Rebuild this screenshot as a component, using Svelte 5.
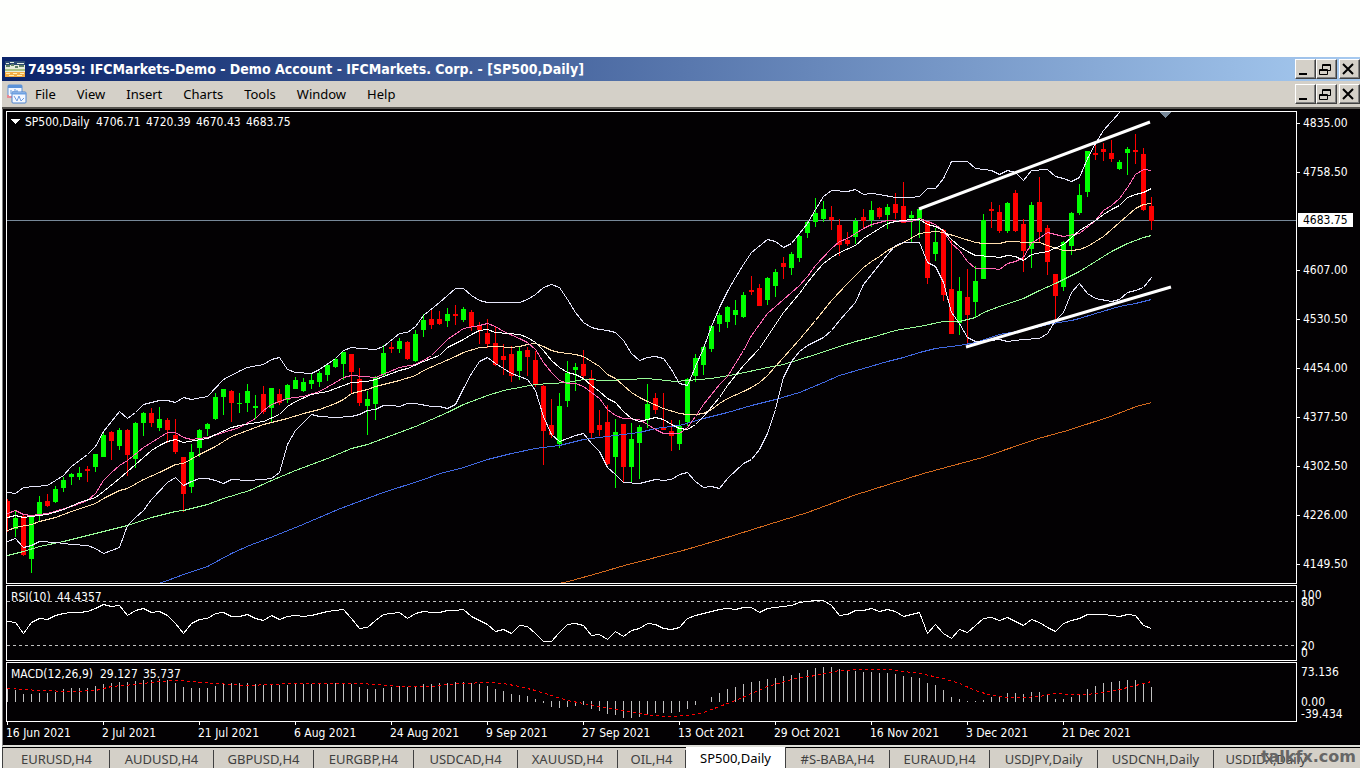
<script>
  const menus = ["File", "View", "Insert", "Charts", "Tools", "Window", "Help"];

  const tabs = [
    { name: "EURUSD,H4", width: 106 },
    { name: "AUDUSD,H4", width: 104 },
    { name: "GBPUSD,H4", width: 100 },
    { name: "EURGBP,H4", width: 100 },
    { name: "USDCAD,H4", width: 104 },
    { name: "XAUUSD,H4", width: 100 },
    { name: "OIL,H4", width: 68 },
    { name: "SP500,Daily", width: 100, active: true },
    { name: "#S-BABA,H4", width: 104 },
    { name: "EURAUD,H4", width: 100 },
    { name: "USDJPY,Daily", width: 108 },
    { name: "USDCNH,Daily", width: 116 },
    { name: "USDIDX,Daily", width: 104 }
  ];

  const prices = [
    "4835.00", "4758.50", "4683.75", "4607.00", "4530.50",
    "4454.00", "4377.50", "4302.50", "4226.00", "4149.50"
  ];

  const ohlc = ["4706.71", "4720.39", "4670.43", "4683.75"];

  const dates = [
    "16 Jun 2021", "2 Jul 2021", "21 Jul 2021", "6 Aug 2021",
    "24 Aug 2021", "9 Sep 2021", "27 Sep 2021", "13 Oct 2021",
    "29 Oct 2021", "16 Nov 2021", "3 Dec 2021", "21 Dec 2021"
  ];

  const step = 8;

  // high, body top, body bottom, low, rising
  const candles = [
    [499, 501, 518, 532, 0], [510, 518, 529, 537, 1], [515, 516, 555, 556, 0], [515, 516, 559, 573, 1],
    [496, 502, 514, 521, 1], [494, 501, 506, 507, 0], [486, 489, 502, 503, 1], [477, 480, 488, 492, 1],
    [473, 474, 477, 485, 1], [467, 473, 477, 480, 1], [466, 469, 471, 482, 0], [454, 454, 467, 472, 1],
    [432, 435, 457, 457, 1], [431, 432, 441, 460, 0], [428, 430, 446, 450, 1], [429, 430, 455, 476, 0],
    [422, 423, 459, 468, 1], [412, 413, 423, 436, 1], [408, 413, 423, 427, 0], [407, 419, 428, 431, 1],
    [418, 420, 430, 443, 0], [419, 435, 452, 454, 0], [457, 457, 494, 512, 0], [444, 452, 487, 493, 1],
    [429, 430, 448, 457, 1], [423, 424, 429, 436, 1], [393, 397, 419, 420, 1], [389, 389, 397, 415, 1],
    [390, 391, 403, 422, 0], [393, 403, 404, 413, 1], [384, 391, 403, 412, 1], [395, 406, 408, 419, 1],
    [386, 394, 412, 414, 0], [388, 388, 408, 422, 1], [389, 394, 403, 405, 0], [384, 385, 400, 403, 1],
    [377, 380, 389, 389, 1], [378, 382, 391, 392, 1], [373, 380, 384, 389, 1], [371, 373, 382, 387, 1],
    [364, 365, 375, 381, 1], [358, 359, 367, 368, 1], [352, 352, 364, 380, 1], [354, 354, 372, 393, 0],
    [368, 379, 403, 406, 0], [391, 399, 406, 435, 1], [376, 377, 404, 420, 1], [345, 353, 375, 376, 1],
    [342, 347, 349, 353, 0], [338, 341, 349, 353, 1], [341, 342, 359, 360, 0], [330, 334, 361, 362, 1],
    [314, 320, 330, 337, 1], [310, 319, 325, 329, 0], [311, 319, 324, 325, 0], [308, 314, 321, 327, 1],
    [305, 314, 316, 325, 0], [307, 309, 320, 322, 1], [310, 312, 327, 331, 0], [322, 326, 330, 344, 0],
    [319, 333, 344, 348, 0], [326, 343, 365, 366, 0], [344, 356, 360, 375, 0], [346, 354, 376, 382, 0],
    [347, 351, 371, 380, 1], [347, 350, 357, 376, 0], [351, 360, 384, 387, 0], [385, 386, 431, 465, 0],
    [399, 425, 435, 438, 0], [393, 406, 444, 448, 1], [361, 373, 401, 407, 1], [363, 367, 370, 391, 1],
    [350, 364, 376, 378, 0], [370, 378, 433, 439, 0], [410, 425, 430, 436, 0], [405, 422, 464, 465, 0],
    [419, 432, 457, 488, 1], [424, 424, 467, 482, 0], [423, 439, 467, 482, 1], [425, 427, 443, 479, 1],
    [384, 404, 419, 428, 1], [393, 398, 410, 414, 0], [393, 427, 430, 430, 0], [420, 431, 436, 451, 0],
    [420, 426, 444, 450, 1], [378, 379, 422, 426, 1], [354, 358, 376, 382, 1], [346, 347, 365, 375, 1],
    [325, 326, 349, 352, 1], [313, 315, 324, 332, 1], [306, 307, 322, 328, 1], [300, 310, 315, 325, 1],
    [292, 295, 317, 318, 1], [276, 290, 292, 295, 0], [284, 288, 306, 306, 0], [277, 278, 300, 305, 1],
    [269, 272, 286, 297, 1], [257, 263, 267, 279, 0], [252, 254, 268, 275, 1], [235, 236, 258, 262, 1],
    [221, 222, 233, 238, 1], [198, 213, 222, 227, 1], [201, 209, 219, 222, 1], [206, 217, 220, 230, 0],
    [219, 225, 245, 256, 0], [232, 240, 244, 246, 0], [218, 221, 237, 244, 1], [209, 217, 221, 229, 0],
    [201, 210, 220, 227, 1], [207, 208, 217, 219, 0], [204, 207, 215, 229, 1], [193, 204, 213, 219, 0],
    [182, 206, 223, 223, 0], [211, 215, 218, 242, 1], [208, 209, 219, 238, 1], [221, 221, 278, 284, 0],
    [228, 242, 254, 261, 1], [229, 230, 295, 301, 0], [239, 289, 334, 334, 0], [277, 291, 323, 335, 1],
    [269, 297, 315, 344, 0], [266, 281, 302, 317, 1], [214, 220, 279, 279, 1], [202, 209, 211, 228, 0],
    [205, 212, 231, 233, 0], [202, 203, 231, 233, 1], [190, 193, 231, 232, 0], [219, 224, 251, 272, 0],
    [202, 205, 249, 268, 1], [177, 202, 232, 242, 0], [225, 228, 262, 275, 0], [274, 274, 296, 320, 0],
    [241, 242, 287, 291, 1], [212, 213, 246, 255, 1], [184, 195, 213, 215, 1], [151, 151, 192, 197, 1],
    [143, 153, 155, 160, 0], [143, 149, 152, 161, 0], [140, 153, 159, 162, 0], [160, 162, 169, 170, 1],
    [147, 149, 153, 175, 1], [134, 150, 152, 164, 0], [148, 154, 210, 211, 0], [197, 206, 221, 230, 0]
  ];

  const lines = [
    {
      name: "ma200",
      points: "558,583 568,581 600,572 624,565 686,549 720,539 768,524 807,512 853,495 923,473 982,457 1038,438 1067,430 1110,416 1136,406 1151,402"
    },
    {
      name: "ma100",
      points: "155,584 167,580 183,574 207,566 231,553 249,545 270,537 300,525 340,508 380,493 420,480 440,473 463,467 487,459 511,453 535,448 559,445 583,439 607,436 639,432 655,428 679,425 703,418 727,412 751,405 775,399 799,392 823,382 839,375 863,368 887,361 903,357 919,352 935,348 959,345 975,342 999,334 1023,330 1047,324 1071,320 1079,318 1095,313 1119,306 1135,303 1151,299"
    },
    {
      name: "ma50",
      points: "7,555 23,551 39,546 63,541 95,533 127,525 151,517 175,511 183,510 207,504 223,498 249,490 271,480 295,470 327,458 351,448 367,444 391,435 415,426 431,419 447,412 463,404 487,395 503,390 535,384 551,383 567,382 583,379 607,380 647,378 675,381 687,380 711,378 735,374 767,367 783,364 799,359 815,354 839,346 855,341 871,337 895,330 919,326 943,321 959,321 975,317 983,312 999,306 1023,298 1039,290 1055,283 1071,275 1079,271 1111,251 1127,243 1143,237 1151,235"
    },
    {
      name: "slow",
      points: "7,530 15,527 31,524 39,521 55,517 71,511 95,503 103,498 119,490 127,488 143,479 159,472 175,464 183,463 199,454 215,446 231,436 247,430 263,424 287,418 303,413 319,409 335,403 343,399 351,393 359,391 367,389 375,386 399,380 415,375 423,370 439,363 455,356 463,352 479,347 495,346 511,347 519,346 527,344 535,343 543,346 551,350 559,352 575,354 583,356 591,361 599,366 607,374 615,378 623,385 631,392 639,397 647,401 663,408 679,413 687,414 695,414 703,413 711,409 719,403 727,398 743,391 751,387 759,382 767,375 775,366 783,357 799,339 815,320 831,300 847,283 863,267 871,261 879,256 887,250 895,246 903,242 919,233 935,231 943,232 959,237 975,242 983,243 999,243 1007,241 1031,242 1039,242 1047,245 1063,250 1071,250 1079,249 1087,246 1103,236 1119,222 1135,208 1143,204 1151,203"
    },
    {
      name: "band",
      points: "7,492 15,493 23,487 47,485 63,475 71,466 87,454 95,446 103,431 119,411 127,418 135,412 143,404 159,400 167,400 175,402 183,397 191,399 207,396 223,379 240,370 247,367 263,364 271,359 279,357 287,369 295,372 311,373 319,369 335,358 343,350 351,347 359,348 375,349 383,346 399,333 407,332 415,326 423,315 439,302 455,288 463,288 471,295 479,300 487,302 519,302 527,299 535,294 543,287 551,284 559,287 567,299 575,312 583,322 591,327 599,329 607,330 615,332 623,340 631,353 639,360 647,357 655,356 663,358 671,369 679,383 687,385 695,366 703,348 711,326 719,307 727,291 735,277 743,264 751,252 767,239 775,241 783,247 791,243 799,233 807,223 815,209 823,196 831,190 847,191 855,189 863,194 871,193 879,194 895,197 911,197 919,196 927,188 935,188 943,178 951,161 967,161 975,168 991,170 999,174 1007,170 1015,172 1023,180 1031,170 1047,169 1055,176 1063,178 1071,181 1079,177 1087,158 1095,143 1103,130 1111,121 1120,111"
    },
    {
      name: "band",
      points: "7,541 15,538 23,547 31,545 39,541 55,542 71,544 87,545 95,548 103,553 111,550 119,547 127,525 135,517 143,510 151,499 167,482 175,477 183,485 191,481 199,478 207,478 215,480 223,483 231,479 247,480 263,479 271,478 279,472 287,444 295,430 311,414 319,416 335,417 351,416 359,414 367,410 375,409 383,405 391,405 399,406 407,403 415,403 431,406 439,406 447,408 455,404 463,388 471,373 479,361 487,357 495,363 511,373 527,379 535,390 543,416 551,434 559,441 575,435 583,433 591,443 599,451 607,467 615,474 623,482 639,483 655,479 663,480 671,479 679,474 687,472 695,481 703,487 711,486 719,488 727,478 743,463 751,459 759,449 767,433 775,409 783,377 791,361 799,351 807,345 815,341 823,337 831,330 839,320 855,302 863,284 871,274 887,254 895,245 903,242 919,242 927,262 935,266 943,282 951,312 959,323 967,337 975,341 991,340 999,339 1007,341 1023,339 1039,338 1047,333 1055,320 1063,312 1071,292 1079,283 1087,293 1095,298 1111,301 1119,299 1127,292 1135,290 1143,287 1151,277"
    },
    {
      name: "fast",
      points: "7,513 15,510 23,514 31,515 47,513 71,506 87,500 95,493 103,480 111,472 119,465 127,460 143,447 159,437 167,432 175,432 183,437 191,439 207,437 223,432 239,427 255,418 263,410 271,404 287,398 303,396 319,391 335,382 343,377 351,375 375,377 399,367 415,364 423,360 431,355 447,339 463,328 479,325 487,323 495,326 503,331 519,338 527,342 535,349 543,362 551,372 559,380 567,383 575,383 583,386 599,398 607,409 615,415 623,418 639,419 647,424 655,429 663,433 679,433 687,427 695,416 703,404 711,394 719,384 727,376 735,363 743,350 751,335 759,324 767,313 783,299 799,285 807,276 815,265 831,248 839,241 847,238 855,233 863,228 871,224 879,222 887,220 903,221 911,221 919,218 935,224 943,231 951,243 959,250 967,261 975,268 991,268 999,269 1007,263 1015,261 1023,257 1031,243 1047,232 1063,236 1079,233 1095,220 1103,210 1111,205 1119,198 1127,187 1135,174 1143,169 1151,170"
    },
    {
      name: "mid",
      points: "7,517 15,515 23,517 31,516 47,514 63,509 79,502 95,497 103,491 119,478 127,471 143,457 151,450 159,445 167,441 175,439 183,442 207,438 215,434 231,427 239,425 263,421 279,414 287,406 295,401 311,394 327,391 335,388 351,382 367,381 375,379 383,376 399,370 407,368 423,361 439,355 447,347 463,339 471,334 479,330 487,329 495,332 519,334 527,337 535,342 543,350 551,360 559,367 567,372 575,374 583,378 591,385 599,391 607,398 615,402 623,411 631,418 639,421 655,417 663,419 671,424 679,428 687,429 695,424 703,416 719,397 727,385 735,375 743,365 759,348 767,336 775,324 783,312 799,293 807,282 815,272 823,263 831,257 839,252 855,245 863,238 879,228 887,223 895,221 911,219 919,219 927,224 935,226 943,230 951,239 959,246 967,251 975,255 991,256 999,257 1007,255 1015,256 1023,260 1031,254 1047,251 1063,244 1071,237 1079,230 1095,220 1103,214 1111,209 1119,205 1127,197 1135,194 1143,192 1151,188"
    }
  ];

  // vertical position of each bar's RSI in the pane
  const rsi = [
    35, 36, 47, 36, 32, 33, 29, 27, 26, 26, 25, 22, 18, 20, 19, 29, 24, 22, 26, 25, 29, 37, 47, 37, 33,
    32, 27, 26, 30, 30, 28, 32, 34, 29, 33, 30, 29, 30, 29, 27, 25, 24, 23, 32, 42, 41, 34, 28, 27, 26,
    32, 27, 25, 26, 26, 24, 24, 23, 30, 34, 38, 45, 43, 47, 39, 40, 47, 55, 55, 46, 38, 37, 39, 49, 48,
    53, 45, 50, 44, 42, 37, 38, 42, 43, 41, 32, 29, 27, 25, 23, 22, 23, 21, 21, 26, 22, 21, 20, 19, 16,
    15, 14, 14, 19, 29, 28, 24, 24, 22, 25, 23, 25, 30, 28, 26, 47, 38, 47, 52, 43, 46, 39, 32, 31, 34,
    31, 35, 39, 33, 36, 41, 45, 37, 34, 32, 28, 28, 28, 29, 30, 28, 29, 39, 42
  ];

  // bar lengths, up from the zero line
  const macd = [
    13, 12, 8, 8, 9, 9, 10, 13, 14, 14, 14, 16, 18, 19, 20, 20, 21, 22, 22, 23, 22, 19, 15, 14, 14,
    14, 16, 18, 19, 19, 19, 18, 17, 18, 17, 17, 18, 18, 18, 18, 18, 19, 18, 18, 15, 13, 13, 14, 15, 16,
    15, 15, 18, 18, 19, 19, 20, 20, 19, 18, 16, 13, 11, 8, 7, 6, 3, -2, -6, -7, -6, -5, -4, -8, -10,
    -13, -14, -17, -17, -16, -14, -12, -12, -12, -11, -8, -4, 0, 5, 9, 13, 15, 18, 20, 21, 23, 24, 26, 27, 29,
    32, 34, 35, 35, 33, 32, 31, 30, 30, 29, 29, 28, 26, 25, 24, 19, 17, 12, 5, 3, 1, 1, 2, 5, 6,
    9, 9, 8, 10, 10, 7, 3, 3, 5, 8, 13, 16, 19, 20, 21, 22, 22, 19, 15
  ];

  const signal =
    "7,688 23,689 39,690 71,691 95,690 111,686 135,684 159,681 175,680 191,681 199,682 215,683 247,685 271,684 287,683 359,683 375,684 400,686 430,686 447,684 463,683 487,682 503,683 519,686 535,690 551,695 567,700 583,703 599,706 623,710 639,713 650,715 671,716 687,715 703,712 719,706 735,700 751,693 767,686 791,679 815,675 839,670 863,669 887,669 903,671 919,673 943,678 959,683 975,690 991,695 1007,697 1023,697 1039,696 1055,693 1071,694 1087,694 1103,692 1119,689 1135,685 1143,683 1151,681";

  const rsiPoints = rsi.map((y, i) => `${i * step},${y}`).join(" ");
</script>

{#snippet windowButtons(label)}
  <div class="win-buttons">
    <button aria-label="Minimize {label}">
      <svg width="16" height="15"><path d="M3 12h8" stroke="#000" stroke-width="2" /></svg>
    </button>
    <button aria-label="Restore {label}">
      <svg width="16" height="15">
        <path d="M5.500 7V2.500h8v6h-3M5 3.500h9M2.500 7.500h8v5h-8zM2 8.500h9" fill="none" stroke="#000" />
      </svg>
    </button>
    <button class="close" aria-label="Close {label}">
      <svg width="16" height="15"><path d="M3 2l10 10M13 2L3 12" stroke="#000" stroke-width="2" /></svg>
    </button>
  </div>
{/snippet}

<div class="terminal">
  <header class="title-bar">
    <svg class="app-icon" width="20" height="16" shape-rendering="crispEdges">
      <rect width="20" height="16" fill="#e8ecd8" />
      <rect width="20" height="4" fill="#2c4a72" />
      <path d="M1 2h3M5 1h4M12 2h7" stroke="#e6efe0" />
      <path d="M1 5h4M6 4h3M10 6h3M14 5h5" stroke="#5c7f66" stroke-width="2" />
      <path d="M0 9h20" stroke="#a9c183" stroke-width="2" />
      <rect y="11" width="20" height="5" fill="#f3ad45" />
      <path d="M1 12h4M8 12h4M15 12h4M4 14h5M12 14h5" stroke="#fff0b5" />
    </svg>
    <h1>749959: IFCMarkets-Demo - Demo Account - IFCMarkets. Corp. - [SP500,Daily]</h1>
    {@render windowButtons("terminal")}
  </header>

  <nav class="menu-bar">
    <svg class="doc-icon" width="20" height="20">
      <rect x="1" y="1" width="14" height="12" rx="1" fill="#f4f8ff" stroke="#5c93d8" />
      <path d="M1 2.500h14" stroke="#5c93d8" stroke-width="3" />
      <path d="M4 10V6M6 10V7M8 8V5M10 10V6" stroke="#5c93d8" />
      <path d="M1 11v2h4" fill="none" stroke="#e88a94" stroke-width="2" />
      <rect x="5" y="8" width="14" height="11" rx="1" fill="#f4f8ff" stroke="#4d83cf" />
      <path d="M5 9.500h14" stroke="#6da1e2" stroke-width="2" />
      <path d="M7 12l3 5 2-5 2 5 3-3" fill="none" stroke="#6b9be0" />
    </svg>
    {#each menus as menu}
      <button class="menu">{menu}</button>
    {/each}
    {@render windowButtons("chart")}
  </nav>

  <main class="chart">
    <section class="row price-row">
      <div class="pane">
        <svg class="plot" shape-rendering="crispEdges" role="img" aria-label="SP500 daily candles">
          <path d="M0 108.500h4000" class="bid" />
          <g transform="translate(0 -112)">
            {#each candles as [high, top, bottom, low, up], i}
              <g class={up ? "up" : "down"}>
                <rect x={i * step} y={high} width="1" height={low - high} />
                <rect x={i * step - 2} y={top} width="5" height={bottom - top} />
              </g>
            {/each}
          </g>
          <g transform="translate(-6.500 -111.500)">
            {#each lines as line}
              <polyline class="line {line.name}" points={line.points} />
            {/each}
          </g>
          <g transform="translate(-7 -112)">
            <path class="trend" d="M919 209L1150 122M966 347L1171 287" />
            <path d="M1159 112h12l-6 6z" fill="#778899" />
            <path d="M10 119h10l-5 5z" fill="#fff" />
          </g>
          <text class="caption" x="18" y="14">SP500,Daily</text>
          {#each ohlc as value, i}
            <text class="caption" x={89 + i * 50} y="14">{value}</text>
          {/each}
        </svg>
      </div>
      <div class="axis price-axis">
        {#each prices as price, i}
          <span class:current={i === 2}>{price}</span>
        {/each}
      </div>
    </section>

    <section class="row rsi-row">
      <div class="pane">
        <svg class="plot" shape-rendering="crispEdges" role="img" aria-label="RSI">
          <path class="level" d="M0 15.500h4000M0 59.500h4000" />
          <g transform="translate(0.500 0.500)">
            <polyline class="line mid" points={rsiPoints} />
          </g>
          <text class="caption" x="4" y="15">RSI(10)</text>
          <text class="caption" x="50" y="15">44.4357</text>
        </svg>
      </div>
      <div class="axis rsi-axis">
        <span>100</span>
        <span>80</span>
        <span class="low">20</span>
        <span>0</span>
      </div>
    </section>

    <section class="row macd-row">
      <div class="pane">
        <svg class="plot" shape-rendering="crispEdges" role="img" aria-label="MACD">
          {#each macd as v, i}
            <rect x={i * step} y={v > 0 ? 39 - v : 38} width="1" height={Math.abs(v)} fill="#c0c0c0" />
          {/each}
          <g transform="translate(-6.500 -662.500)">
            <polyline class="line signal" points={signal} />
          </g>
          <text class="caption" x="4" y="15">MACD(12,26,9)</text>
          <text class="caption" x="93" y="15">29.127</text>
          <text class="caption" x="136" y="15">35.737</text>
        </svg>
      </div>
      <div class="axis macd-axis">
        <span>73.136</span>
        <span class="zero">0.00</span>
        <span>-39.434</span>
      </div>
    </section>

    <div class="time-axis">
      {#each dates as date}
        <span>{date}</span>
      {/each}
    </div>
  </main>

  <footer class="tabs">
    {#each tabs as tab}
      <button class="tab" class:active={tab.active} style="width: {tab.width}px">{tab.name}</button>
    {/each}
    <span class="watermark">talkfx.com</span>
  </footer>
</div>

<style>
  :global(body) {
    background: #fefffd;
  }

  .terminal {
    padding: 57px 0 0 2px;
    font-family: "DejaVu Sans Condensed", "Noto Sans", sans-serif;
    font-size: 12px;
    color: #000;
    overflow: hidden;
  }

  button {
    margin: 0;
    padding: 0;
    border: 0;
    background: none;
    font: inherit;
    color: inherit;
  }

  .title-bar {
    display: flex;
    align-items: center;
    height: 24px;
    padding-left: 3px;
    background: linear-gradient(90deg, #0a246a, #a6caf0);
  }

  h1 {
    flex: 1;
    margin: 0 0 0 3px;
    font-size: 14px;
    line-height: 24px;
    color: #fff;
    white-space: nowrap;
  }

  .menu-bar {
    display: flex;
    align-items: center;
    height: 26px;
    padding-left: 5px;
    background: #d4d0c8;
    border-bottom: 2px solid #55534f;
    font-family: "Noto Sans", sans-serif;
    font-size: 13px;
  }

  .doc-icon {
    margin-right: 8px;
  }

  .menu {
    margin-right: 21px;
    line-height: 26px;
    white-space: nowrap;
  }

  .win-buttons {
    display: flex;
    margin-left: auto;
  }

  .win-buttons button {
    display: flex;
    align-items: center;
    width: 21px;
    height: 20px;
    background: #d4d0c8;
    border: 1px solid;
    border-color: #fff #404040 #404040 #fff;
    box-shadow: inset -1px -1px #808080;
  }

  .win-buttons .close {
    margin-left: 2px;
  }

  .chart {
    padding: 2px 0 0 3px;
    background: #030103;
    border-left: 1px solid #808080;
    border-bottom: 2px solid #deded8;
    color: #fff;
  }

  .row {
    display: flex;
    margin-bottom: 1px;
  }

  .pane {
    flex: 1;
    min-width: 0;
    border: 1px solid #fff;
  }

  .plot {
    display: block;
    width: 100%;
    height: 100%;
    overflow: hidden;
  }

  .price-row {
    height: 473px;
  }

  .rsi-row {
    height: 76px;
  }

  .macd-row {
    height: 60px;
    margin-bottom: 0;
  }

  .axis {
    display: flex;
    flex-direction: column;
    align-items: flex-start;
    width: 63px;
  }

  .axis span {
    padding-left: 4px;
    line-height: 7px;
  }

  .price-axis {
    box-sizing: border-box;
    gap: 33px;
    padding-top: 4px;
  }

  .price-axis span {
    display: flex;
    align-items: center;
    padding-left: 0;
    line-height: 16px;
  }

  .price-axis span::before {
    content: "";
    width: 3px;
    height: 1px;
    margin-right: 3px;
    background: #fff;
  }

  .price-axis .current {
    height: 14px;
    margin: 0 0 2px 1px;
    padding: 0 5px;
    background: #fff;
    color: #000;
    line-height: 14px;
  }

  .price-axis .current::before {
    display: none;
  }

  .rsi-axis {
    padding-top: 7px;
  }

  .rsi-axis .low {
    margin-top: 37px;
  }

  .axis.macd-axis span {
    line-height: 12px;
  }

  .macd-axis {
    padding-top: 4px;
  }

  .macd-axis .zero {
    margin-top: 18px;
  }

  .caption {
    fill: #fff;
    font-size: 12px;
  }

  .up {
    fill: #00ff00;
  }

  .down {
    fill: #ff0000;
  }

  .bid {
    stroke: #778899;
  }

  .level {
    stroke: #c0c0c0;
    stroke-dasharray: 3 3;
  }

  .line {
    fill: none;
    stroke-width: 1px;
  }

  .mid {
    stroke: #fff;
  }

  .band {
    stroke: #e6e6fa;
  }

  .fast {
    stroke: #ff69b4;
  }

  .slow {
    stroke: #ffdead;
  }

  .ma50 {
    stroke: #98fb98;
  }

  .ma100 {
    stroke: #4169e1;
  }

  .ma200 {
    stroke: #d2691e;
  }

  .signal {
    stroke: #ff0000;
    stroke-dasharray: 3 3;
  }

  .trend {
    fill: none;
    stroke: #fff;
    stroke-width: 3px;
    shape-rendering: auto;
  }

  .time-axis {
    display: flex;
    height: 23px;
    overflow: hidden;
  }

  .time-axis span {
    flex: 0 0 96px;
    line-height: 16px;
    white-space: nowrap;
  }

  .time-axis span::before {
    content: "";
    display: block;
    width: 1px;
    height: 3px;
    margin-left: 1px;
    background: #fff;
  }

  .tabs {
    position: relative;
    display: flex;
    align-items: flex-end;
    height: 20px;
    padding-left: 1px;
    background: #d4d0c8;
    border-left: 1px solid #404040;
    border-top: 1px solid #000;
    font-family: "Noto Sans", sans-serif;
    font-size: 13px;
  }

  .tab {
    flex: none;
    height: 18px;
    border-right: 1px solid #404040;
    color: #404040;
    line-height: 16px;
    white-space: nowrap;
  }

  .tab.active {
    height: 21px;
    background: #fff;
    color: #000;
  }

  .tab:last-of-type {
    border-right: 0;
  }

  .watermark {
    position: absolute;
    right: 4px;
    bottom: 1px;
    color: #666;
    font: bold 16px/20px "DejaVu Sans", sans-serif;
  }
</style>
